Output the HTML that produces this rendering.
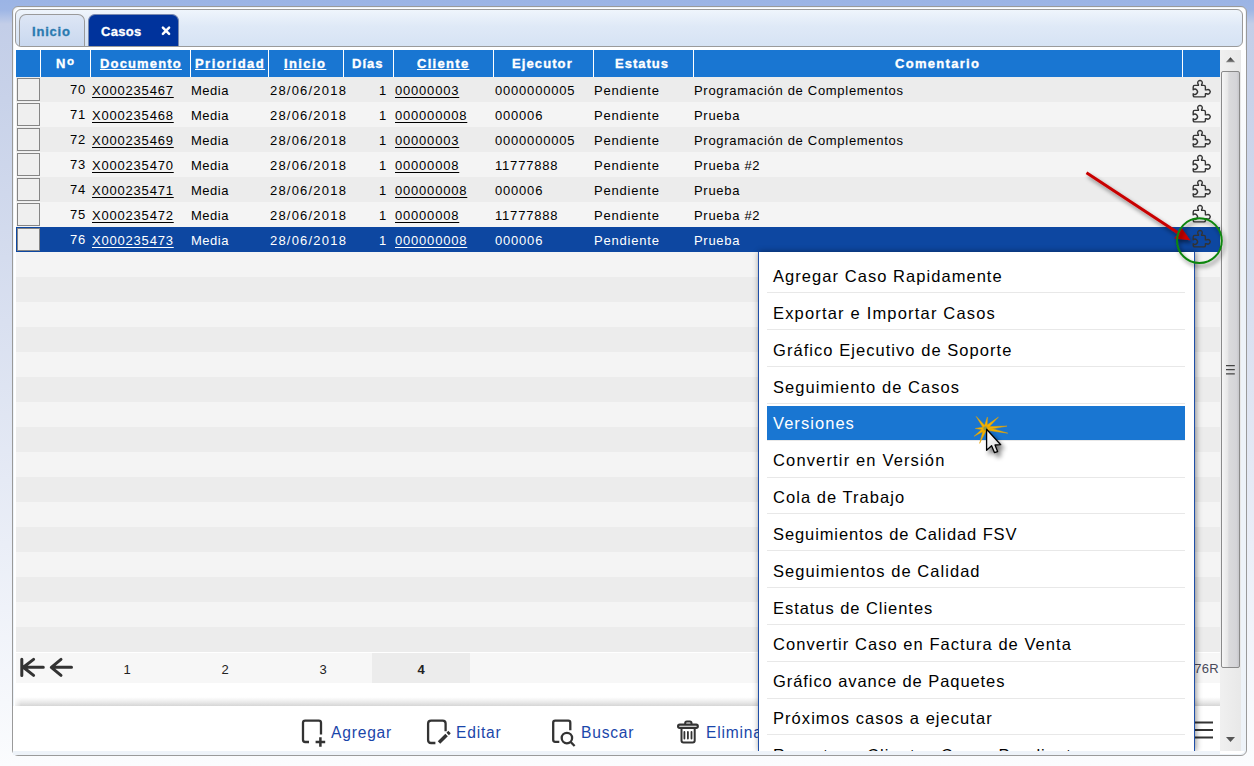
<!DOCTYPE html><html><head><meta charset="utf-8"><style>*{margin:0;padding:0;box-sizing:border-box}
html,body{width:1254px;height:766px;overflow:hidden;font-family:"Liberation Sans",sans-serif;position:relative}
.bg{position:absolute;left:0;top:0;width:1254px;height:766px;background:linear-gradient(to bottom,#9bb4e5 0px,#9eb6e5 10px,#c3cee8 24px,#c8d2e9 100px,#fbfcfe 766px)}
.panel{position:absolute;left:12px;top:6px;width:1235px;height:750px;border:1px solid #9a9a9a;border-radius:6px;background:#fff;box-shadow:inset 1px 1px 0 #edf3f9,inset -1px -1px 0 #edf3f9}
.strip{position:absolute;left:15px;top:9px;width:1228px;height:38px;border:1px solid #9a9a9a;border-radius:6px;background:linear-gradient(#eff5fc,#dfe9f7 45%,#d6e3f4)}
.tab{position:absolute;top:14px;height:32px;border:1px solid #9a9a9a;border-bottom:none;border-radius:7px 7px 0 0;font-weight:bold;font-size:13px}
.tab span{position:absolute;top:9px;-webkit-text-stroke:0.3px currentColor}
.t1{left:19px;width:66px;background:linear-gradient(#dde6f5,#c9d8ef);color:#2a7ab0}
.t1 span{left:12px;letter-spacing:0.8px}
.t2{left:88px;width:91px;background:#00339c;color:#fff;border-color:#7a8ab0}
.t2 span{left:12px;letter-spacing:0.3px}
.t2 .x{position:absolute;left:71px;top:10px}
.hdr{position:absolute;left:16px;top:50px;width:1204px;height:27px;background:#1976d2}
.vs{position:absolute;top:0;width:1px;height:27px;background:#fff}
.ht{position:absolute;top:6px;color:#fff;font-weight:bold;font-size:13px;letter-spacing:1.3px;white-space:nowrap;-webkit-text-stroke:0.35px #fff}
.u{text-decoration:underline}
.row{position:absolute;left:16px;width:1204px;height:25px;font-size:13px;color:#000}
.r0{background:#ececec}
.r1{background:#f4f4f4}
.rs{background:#0d47a1;color:#fff}
.cb{position:absolute;left:1px;top:1px;width:23px;height:23px;border:1px solid #858585;background:#efefef;z-index:1}
.row::before{content:"";position:absolute;left:0;top:0;width:25px;height:25px;background:inherit}
.c{position:absolute;top:6px;white-space:nowrap;letter-spacing:0.8px;text-underline-offset:2px}
.pz{position:absolute;left:1170px;top:0px}
.pager{position:absolute;left:16px;top:653px;width:1204px;height:30px;background:#f7f7f7}
.pg1{position:absolute;left:2px;top:4px}
.pn{position:absolute;top:0;width:98px;height:30px;line-height:33px;text-align:center;font-size:13px;color:#222}
.pa{background:#ececec;font-weight:bold}
.cnt{position:absolute;right:1px;top:8px;font-size:13px;color:#4a4a5a;letter-spacing:0.3px}
.shadowline{position:absolute;left:15px;top:697px;width:1205px;height:9px;background:linear-gradient(rgba(215,215,215,0),rgba(215,215,215,.35) 40%,#d6d6d6);-webkit-mask-image:linear-gradient(to right,rgba(0,0,0,.3),#000 6px)}
.tb{position:absolute;left:13px;top:706px;width:1207px;height:49px;background:#fff}
.ic{position:absolute;top:6px}
.tl{position:absolute;top:17.5px;font-size:15.6px;color:#1a46aa;letter-spacing:0.8px;white-space:nowrap}
.hamb{position:absolute;left:1180px;top:11px}
.tbbot{position:absolute;left:0;top:45px;width:1207px;height:4px;background:#eef3f9}
.sb{position:absolute;left:1220px;top:50px;width:21px;height:701px;background:linear-gradient(to right,#f0f0f0,#e8e8e8)}
.sb .up{position:absolute;left:0;top:1px}
.sb .dn{position:absolute;left:0;top:686px}
.sb .th{position:absolute;left:1px;top:21px;width:19px;height:597px;border:1px solid #8a8a8a;border-radius:2px;background:linear-gradient(to right,#f6f6f6,#e6e6e6 35%,#dadadc 40%,#d4d4d8 85%,#c6c6ca)}
.sb .grip{position:absolute;left:3px;top:292px}
.mclip{position:absolute;left:700px;top:240px;width:540px;height:511px;overflow:hidden}
.menu{position:absolute;left:58px;top:12px;width:437px;height:499px;background:#fff;border:1px solid #1f4fa8;border-top:none;border-bottom:none;overflow:hidden;box-shadow:1px 0 6px rgba(0,0,0,.45)}
.mi{position:absolute;left:8px;width:418px;height:37px;border-bottom:1px solid #e8e8e8;font-size:16.5px;color:#000}
.mi span{position:absolute;left:6px;top:12px;white-space:nowrap;letter-spacing:1.05px}
.ms{}.ms::before{content:"";position:absolute;left:0;top:2px;width:418px;bottom:0;background:#1976d2}.ms span{color:#fff}
.ann{position:absolute;left:0;top:0}

.ra0{top:5px}
.dt{letter-spacing:1.2px}
.sbr{position:absolute;left:1241px;top:50px;width:5px;height:701px;background:linear-gradient(#fff,#eef3f9 200px)}
</style></head><body>
<div class="bg"></div>
<div class="panel"></div>
<div class="strip"></div>
<div class="tab t1"><span>Inicio</span></div>
<div class="tab t2"><span>Casos</span><svg class="x" width="12" height="12" viewBox="0 0 12 12"><path d="M2.9 2.6L9.1 8.8M9.1 2.6L2.9 8.8" stroke="#fff" stroke-width="2.5" stroke-linecap="round"/></svg></div>
<div class="hdr">
<i class="vs" style="left:24px"></i>
<i class="vs" style="left:74px"></i>
<i class="vs" style="left:174px"></i>
<i class="vs" style="left:252px"></i>
<i class="vs" style="left:327px"></i>
<i class="vs" style="left:377px"></i>
<i class="vs" style="left:477px"></i>
<i class="vs" style="left:577px"></i>
<i class="vs" style="left:677px"></i>
<i class="vs" style="left:1166px"></i>
<span class="ht" style="left:40px;letter-spacing:0.6px">N<span style="font-size:11.5px;position:relative;top:-3px;margin-left:1px">o</span></span>
<span class="ht u" style="left:84px;letter-spacing:1.15px">Documento</span>
<span class="ht u" style="left:179px;letter-spacing:1.45px">Prioridad</span>
<span class="ht u" style="left:268px;letter-spacing:1.4px">Inicio</span>
<span class="ht" style="left:336px;letter-spacing:1px">D&iacute;as</span>
<span class="ht u" style="left:401px;">Cliente</span>
<span class="ht" style="left:496px;letter-spacing:1.1px">Ejecutor</span>
<span class="ht" style="left:599px;letter-spacing:1.0px">Estatus</span>
<span class="ht" style="left:879px;">Comentario</span>
</div>
<div class="row r0" style="top:77px">
<i class="cb"></i>
<span class="c ra ra0" style="right:1134px">70</span>
<span class="c u" style="left:76px">X000235467</span>
<span class="c" style="left:175px;letter-spacing:0.5px">Media</span>
<span class="c dt" style="left:254px">28/06/2018</span>
<span class="c ra" style="right:833px">1</span>
<span class="c u" style="left:379px">00000003</span>
<span class="c" style="left:479px">0000000005</span>
<span class="c" style="left:578px">Pendiente</span>
<span class="c" style="left:678px;letter-spacing:0.7px">Programaci&oacute;n de Complementos</span>
<svg class="pz" width="26" height="25" viewBox="0 0 26 25"><path d="M7.2 12.7V9.9Q7.2 8.4 8.7 8.4H12.4V7.4A2.3 2.3 0 1 1 15.6 7.4V8.4H17.9Q19.4 8.4 19.4 9.9V12.9H20.6A2.3 2.3 0 1 1 20.6 16.7H19.4V18.4Q19.4 19.9 17.9 19.9H8.7Q7.2 19.9 7.2 18.4V16.7A2.6 2.6 0 1 0 7.2 12.7Z" fill="none" stroke="#333" stroke-width="1.4" stroke-linejoin="round"/></svg>
</div>
<div class="row r1" style="top:102px">
<i class="cb"></i>
<span class="c ra ra0" style="right:1134px">71</span>
<span class="c u" style="left:76px">X000235468</span>
<span class="c" style="left:175px;letter-spacing:0.5px">Media</span>
<span class="c dt" style="left:254px">28/06/2018</span>
<span class="c ra" style="right:833px">1</span>
<span class="c u" style="left:379px">000000008</span>
<span class="c" style="left:479px">000006</span>
<span class="c" style="left:578px">Pendiente</span>
<span class="c" style="left:678px;letter-spacing:0.7px">Prueba</span>
<svg class="pz" width="26" height="25" viewBox="0 0 26 25"><path d="M7.2 12.7V9.9Q7.2 8.4 8.7 8.4H12.4V7.4A2.3 2.3 0 1 1 15.6 7.4V8.4H17.9Q19.4 8.4 19.4 9.9V12.9H20.6A2.3 2.3 0 1 1 20.6 16.7H19.4V18.4Q19.4 19.9 17.9 19.9H8.7Q7.2 19.9 7.2 18.4V16.7A2.6 2.6 0 1 0 7.2 12.7Z" fill="none" stroke="#333" stroke-width="1.4" stroke-linejoin="round"/></svg>
</div>
<div class="row r0" style="top:127px">
<i class="cb"></i>
<span class="c ra ra0" style="right:1134px">72</span>
<span class="c u" style="left:76px">X000235469</span>
<span class="c" style="left:175px;letter-spacing:0.5px">Media</span>
<span class="c dt" style="left:254px">28/06/2018</span>
<span class="c ra" style="right:833px">1</span>
<span class="c u" style="left:379px">00000003</span>
<span class="c" style="left:479px">0000000005</span>
<span class="c" style="left:578px">Pendiente</span>
<span class="c" style="left:678px;letter-spacing:0.7px">Programaci&oacute;n de Complementos</span>
<svg class="pz" width="26" height="25" viewBox="0 0 26 25"><path d="M7.2 12.7V9.9Q7.2 8.4 8.7 8.4H12.4V7.4A2.3 2.3 0 1 1 15.6 7.4V8.4H17.9Q19.4 8.4 19.4 9.9V12.9H20.6A2.3 2.3 0 1 1 20.6 16.7H19.4V18.4Q19.4 19.9 17.9 19.9H8.7Q7.2 19.9 7.2 18.4V16.7A2.6 2.6 0 1 0 7.2 12.7Z" fill="none" stroke="#333" stroke-width="1.4" stroke-linejoin="round"/></svg>
</div>
<div class="row r1" style="top:152px">
<i class="cb"></i>
<span class="c ra ra0" style="right:1134px">73</span>
<span class="c u" style="left:76px">X000235470</span>
<span class="c" style="left:175px;letter-spacing:0.5px">Media</span>
<span class="c dt" style="left:254px">28/06/2018</span>
<span class="c ra" style="right:833px">1</span>
<span class="c u" style="left:379px">00000008</span>
<span class="c" style="left:479px">11777888</span>
<span class="c" style="left:578px">Pendiente</span>
<span class="c" style="left:678px;letter-spacing:0.7px">Prueba #2</span>
<svg class="pz" width="26" height="25" viewBox="0 0 26 25"><path d="M7.2 12.7V9.9Q7.2 8.4 8.7 8.4H12.4V7.4A2.3 2.3 0 1 1 15.6 7.4V8.4H17.9Q19.4 8.4 19.4 9.9V12.9H20.6A2.3 2.3 0 1 1 20.6 16.7H19.4V18.4Q19.4 19.9 17.9 19.9H8.7Q7.2 19.9 7.2 18.4V16.7A2.6 2.6 0 1 0 7.2 12.7Z" fill="none" stroke="#333" stroke-width="1.4" stroke-linejoin="round"/></svg>
</div>
<div class="row r0" style="top:177px">
<i class="cb"></i>
<span class="c ra ra0" style="right:1134px">74</span>
<span class="c u" style="left:76px">X000235471</span>
<span class="c" style="left:175px;letter-spacing:0.5px">Media</span>
<span class="c dt" style="left:254px">28/06/2018</span>
<span class="c ra" style="right:833px">1</span>
<span class="c u" style="left:379px">000000008</span>
<span class="c" style="left:479px">000006</span>
<span class="c" style="left:578px">Pendiente</span>
<span class="c" style="left:678px;letter-spacing:0.7px">Prueba</span>
<svg class="pz" width="26" height="25" viewBox="0 0 26 25"><path d="M7.2 12.7V9.9Q7.2 8.4 8.7 8.4H12.4V7.4A2.3 2.3 0 1 1 15.6 7.4V8.4H17.9Q19.4 8.4 19.4 9.9V12.9H20.6A2.3 2.3 0 1 1 20.6 16.7H19.4V18.4Q19.4 19.9 17.9 19.9H8.7Q7.2 19.9 7.2 18.4V16.7A2.6 2.6 0 1 0 7.2 12.7Z" fill="none" stroke="#333" stroke-width="1.4" stroke-linejoin="round"/></svg>
</div>
<div class="row r1" style="top:202px">
<i class="cb"></i>
<span class="c ra ra0" style="right:1134px">75</span>
<span class="c u" style="left:76px">X000235472</span>
<span class="c" style="left:175px;letter-spacing:0.5px">Media</span>
<span class="c dt" style="left:254px">28/06/2018</span>
<span class="c ra" style="right:833px">1</span>
<span class="c u" style="left:379px">00000008</span>
<span class="c" style="left:479px">11777888</span>
<span class="c" style="left:578px">Pendiente</span>
<span class="c" style="left:678px;letter-spacing:0.7px">Prueba #2</span>
<svg class="pz" width="26" height="25" viewBox="0 0 26 25"><path d="M7.2 12.7V9.9Q7.2 8.4 8.7 8.4H12.4V7.4A2.3 2.3 0 1 1 15.6 7.4V8.4H17.9Q19.4 8.4 19.4 9.9V12.9H20.6A2.3 2.3 0 1 1 20.6 16.7H19.4V18.4Q19.4 19.9 17.9 19.9H8.7Q7.2 19.9 7.2 18.4V16.7A2.6 2.6 0 1 0 7.2 12.7Z" fill="none" stroke="#333" stroke-width="1.4" stroke-linejoin="round"/></svg>
</div>
<div class="row rs" style="top:227px">
<i class="cb"></i>
<span class="c ra ra0" style="right:1134px">76</span>
<span class="c u" style="left:76px">X000235473</span>
<span class="c" style="left:175px;letter-spacing:0.5px">Media</span>
<span class="c dt" style="left:254px">28/06/2018</span>
<span class="c ra" style="right:833px">1</span>
<span class="c u" style="left:379px">000000008</span>
<span class="c" style="left:479px">000006</span>
<span class="c" style="left:578px">Pendiente</span>
<span class="c" style="left:678px;letter-spacing:0.7px">Prueba</span>
<svg class="pz" width="26" height="25" viewBox="0 0 26 25"><path d="M7.2 12.7V9.9Q7.2 8.4 8.7 8.4H12.4V7.4A2.3 2.3 0 1 1 15.6 7.4V8.4H17.9Q19.4 8.4 19.4 9.9V12.9H20.6A2.3 2.3 0 1 1 20.6 16.7H19.4V18.4Q19.4 19.9 17.9 19.9H8.7Q7.2 19.9 7.2 18.4V16.7A2.6 2.6 0 1 0 7.2 12.7Z" fill="none" stroke="#333" stroke-width="1.4" stroke-linejoin="round"/></svg>
</div>
<div class="row r1" style="top:252px">
</div>
<div class="row r0" style="top:277px">
</div>
<div class="row r1" style="top:302px">
</div>
<div class="row r0" style="top:327px">
</div>
<div class="row r1" style="top:352px">
</div>
<div class="row r0" style="top:377px">
</div>
<div class="row r1" style="top:402px">
</div>
<div class="row r0" style="top:427px">
</div>
<div class="row r1" style="top:452px">
</div>
<div class="row r0" style="top:477px">
</div>
<div class="row r1" style="top:502px">
</div>
<div class="row r0" style="top:527px">
</div>
<div class="row r1" style="top:552px">
</div>
<div class="row r0" style="top:577px">
</div>
<div class="row r1" style="top:602px">
</div>
<div class="row r0" style="top:627px">
</div>
<div class="pager">
<svg class="pg1" width="60" height="22" viewBox="0 0 60 22"><path d="M3.8 2.3V18.6M5.5 10.3H25.3M15.6 2.4L5.3 10.3L15.6 18.4" fill="none" stroke="#333" stroke-width="3" stroke-linecap="round" stroke-linejoin="round"/><path d="M34.5 10.3H53.5M43 2.4L33.3 10.3L43 18.4" fill="none" stroke="#333" stroke-width="3" stroke-linecap="round" stroke-linejoin="round"/></svg>
<span class="pn" style="left:62px">1</span>
<span class="pn" style="left:160px">2</span>
<span class="pn" style="left:258px">3</span>
<span class="pn pa" style="left:356px">4</span>
<span class="cnt">/76R</span>
</div>
<div class="shadowline"></div>
<div class="tb">
<svg class="ic" style="left:283px" width="40" height="40" viewBox="0 0 40 40"><path d="M13 30H9.2Q7 30 7 27.8V10.8Q7 8.6 9.2 8.6H22.8Q25 8.6 25 10.8V22.5" fill="none" stroke="#333" stroke-width="2.3"/><path d="M19.6 30H29.2M24.4 25.3V34.7" fill="none" stroke="#333" stroke-width="2.5"/></svg>
<span class="tl" style="left:318px">Agregar</span>
<svg class="ic" style="left:407px" width="40" height="40" viewBox="0 0 40 40"><path d="M15.4 31H11.1Q8.1 31 8.1 28V11.6Q8.1 8.6 11.1 8.6H22.6Q25.6 8.6 25.6 11.6V19.3" fill="none" stroke="#333" stroke-width="2.3"/><path d="M19 30.6L26.6 23M27.7 21.9L29.5 20.1" fill="none" stroke="#333" stroke-width="3.5"/></svg>
<span class="tl" style="left:443px">Editar</span>
<svg class="ic" style="left:533px" width="40" height="40" viewBox="0 0 40 40"><path d="M13.3 29.8H9.2Q7.2 29.8 7.2 27.8V10.7Q7.2 8.7 9.2 8.7H22.3Q24.3 8.7 24.3 10.7V18.3" fill="none" stroke="#333" stroke-width="2.3"/><circle cx="20.9" cy="26.1" r="5.2" fill="none" stroke="#333" stroke-width="2.3"/><path d="M24.7 30L28.6 34" stroke="#333" stroke-width="2.3"/></svg>
<span class="tl" style="left:568px">Buscar</span>
<svg class="ic" style="left:655px" width="40" height="40" viewBox="0 0 40 40"><rect x="10.1" y="12.7" width="19.7" height="3.2" rx="1.6" fill="none" stroke="#333" stroke-width="2.2"/><path d="M17.2 12.5V11Q17.2 9.4 18.8 9.4H21.9Q23.5 9.4 23.5 11V12.5" fill="none" stroke="#333" stroke-width="2"/><path d="M13.5 16V28.6Q13.5 30.6 15.5 30.6H24.7Q26.7 30.6 26.7 28.6V16" fill="none" stroke="#333" stroke-width="2"/><path d="M16.4 20V26.6M19.9 20V26.6M23.5 20V26.6" stroke="#333" stroke-width="1.8" stroke-linecap="round"/></svg>
<span class="tl" style="left:693px">Eliminar</span>
<svg class="hamb" width="24" height="22" viewBox="0 0 24 22"><path d="M2 5.5H20M2 13H20M2 20.5H20" stroke="#333" stroke-width="2.2"/></svg>
<div class="tbbot"></div>
</div>
<div class="sbr"></div>
<div class="sb"><svg class="up" width="20" height="12" viewBox="0 0 20 12"><defs><linearGradient id="ug" x1="0" y1="0" x2="0" y2="1"><stop offset="0" stop-color="#222"/><stop offset="1" stop-color="#888"/></linearGradient></defs><path d="M5.8 11.2L10.5 6.2L15.2 11.2Z" fill="url(#ug)"/></svg><i class="th"><svg class="grip" width="12" height="12" viewBox="0 0 12 12"><path d="M1 1.7H9.8M1 5.7H9.8M1 9.8H9.8" stroke="#444" stroke-width="1.3"/></svg></i><svg class="dn" width="20" height="12" viewBox="0 0 20 12"><path d="M6 1L10.5 6L15 1Z" fill="#555"/></svg></div>
<div class="mclip"><div class="menu">
<div class="mi" style="top:4px;height:37px"><span style="top:11px;letter-spacing:1.05px">Agregar Caso Rapidamente</span></div>
<div class="mi" style="top:41px;height:37px"><span style="top:11px;letter-spacing:1.18px">Exportar e Importar Casos</span></div>
<div class="mi" style="top:78px;height:37px"><span style="top:11px;letter-spacing:1.05px">Gr&aacute;fico Ejecutivo de Soporte</span></div>
<div class="mi" style="top:115px;height:37px"><span style="top:11px;letter-spacing:1.05px">Seguimiento de Casos</span></div>
<div class="mi ms" style="top:152px;height:37px"><span style="top:10px;letter-spacing:1.05px">Versiones</span></div>
<div class="mi" style="top:189px;height:37px"><span style="top:10px;letter-spacing:1.15px">Convertir en Versi&oacute;n</span></div>
<div class="mi" style="top:226px;height:36px"><span style="top:10px;letter-spacing:1.05px">Cola de Trabajo</span></div>
<div class="mi" style="top:262px;height:37px"><span style="top:11px;letter-spacing:0.9px">Seguimientos de Calidad FSV</span></div>
<div class="mi" style="top:299px;height:37px"><span style="top:11px;letter-spacing:1.05px">Seguimientos de Calidad</span></div>
<div class="mi" style="top:336px;height:37px"><span style="top:11px;letter-spacing:0.95px">Estatus de Clientes</span></div>
<div class="mi" style="top:373px;height:37px"><span style="top:10px;letter-spacing:1.05px">Convertir Caso en Factura de Venta</span></div>
<div class="mi" style="top:410px;height:37px"><span style="top:10px;letter-spacing:0.93px">Gr&aacute;fico avance de Paquetes</span></div>
<div class="mi" style="top:447px;height:36px"><span style="top:10px;letter-spacing:1.05px">Pr&oacute;ximos casos a ejecutar</span></div>
<div class="mi" style="top:483px;height:37px"><span style="top:11px;letter-spacing:1.05px">Reportar a Clientes Casos Pendientes</span></div>
</div></div>
<svg class="ann" width="1254" height="766" viewBox="0 0 1254 766"><defs><filter id="sh" x="-20%" y="-20%" width="140%" height="140%"><feGaussianBlur in="SourceAlpha" stdDeviation="2.3"/><feOffset dx="2" dy="3"/><feComponentTransfer><feFuncA type="linear" slope="0.5"/></feComponentTransfer><feMerge><feMergeNode/><feMergeNode in="SourceGraphic"/></feMerge></filter><filter id="sh2" x="-50%" y="-50%" width="200%" height="200%"><feGaussianBlur in="SourceAlpha" stdDeviation="2.5"/><feOffset dx="3" dy="4"/><feComponentTransfer><feFuncA type="linear" slope="0.55"/></feComponentTransfer><feMerge><feMergeNode/><feMergeNode in="SourceGraphic"/></feMerge></filter><linearGradient id="cg" x1="0" y1="0" x2="1" y2="1"><stop offset="0" stop-color="#fff"/><stop offset="1" stop-color="#d8d8d8"/></linearGradient></defs><g filter="url(#sh)"><path d="M1086.5 172.8L1179 233.5" stroke="#c80000" stroke-width="3"/><path d="M1190.3 240.2L1174.1 238.6L1181.9 228.2Z" fill="#c80000"/></g><g filter="url(#sh)"><circle cx="1199.4" cy="240.7" r="22.4" fill="none" stroke="#0e860e" stroke-width="2"/></g><g><path d="M986.7 427.4L976.2 416.4L984.1 429.4ZM987.1 428.7L987.4 417.1L983.7 428.1ZM986.5 429.7L998.4 417.1L984.3 427.1ZM985.6 430.1L1007.0 426.1L985.2 426.7ZM985.0 430.1L1007.8 433.2L985.8 426.7ZM984.4 427.0L974.1 436.3L986.4 429.8ZM983.8 427.8L979.6 443.4L987.0 429.0ZM985.4 426.7L975.3 428.5L985.4 430.1Z" fill="#f2b400" stroke="#e8a000" stroke-width="0.5"/><circle cx="985.4" cy="428.4" r="2" fill="#8a9a50"/></g><g filter="url(#sh2)"><path d="M986.6 429.2V450.3L991.6 445.8L994.4 452.6L997.6 451.6L995 445L1000.7 444.7Z" fill="url(#cg)" stroke="#000" stroke-width="1.3" stroke-linejoin="round"/></g></svg>
</body></html>
